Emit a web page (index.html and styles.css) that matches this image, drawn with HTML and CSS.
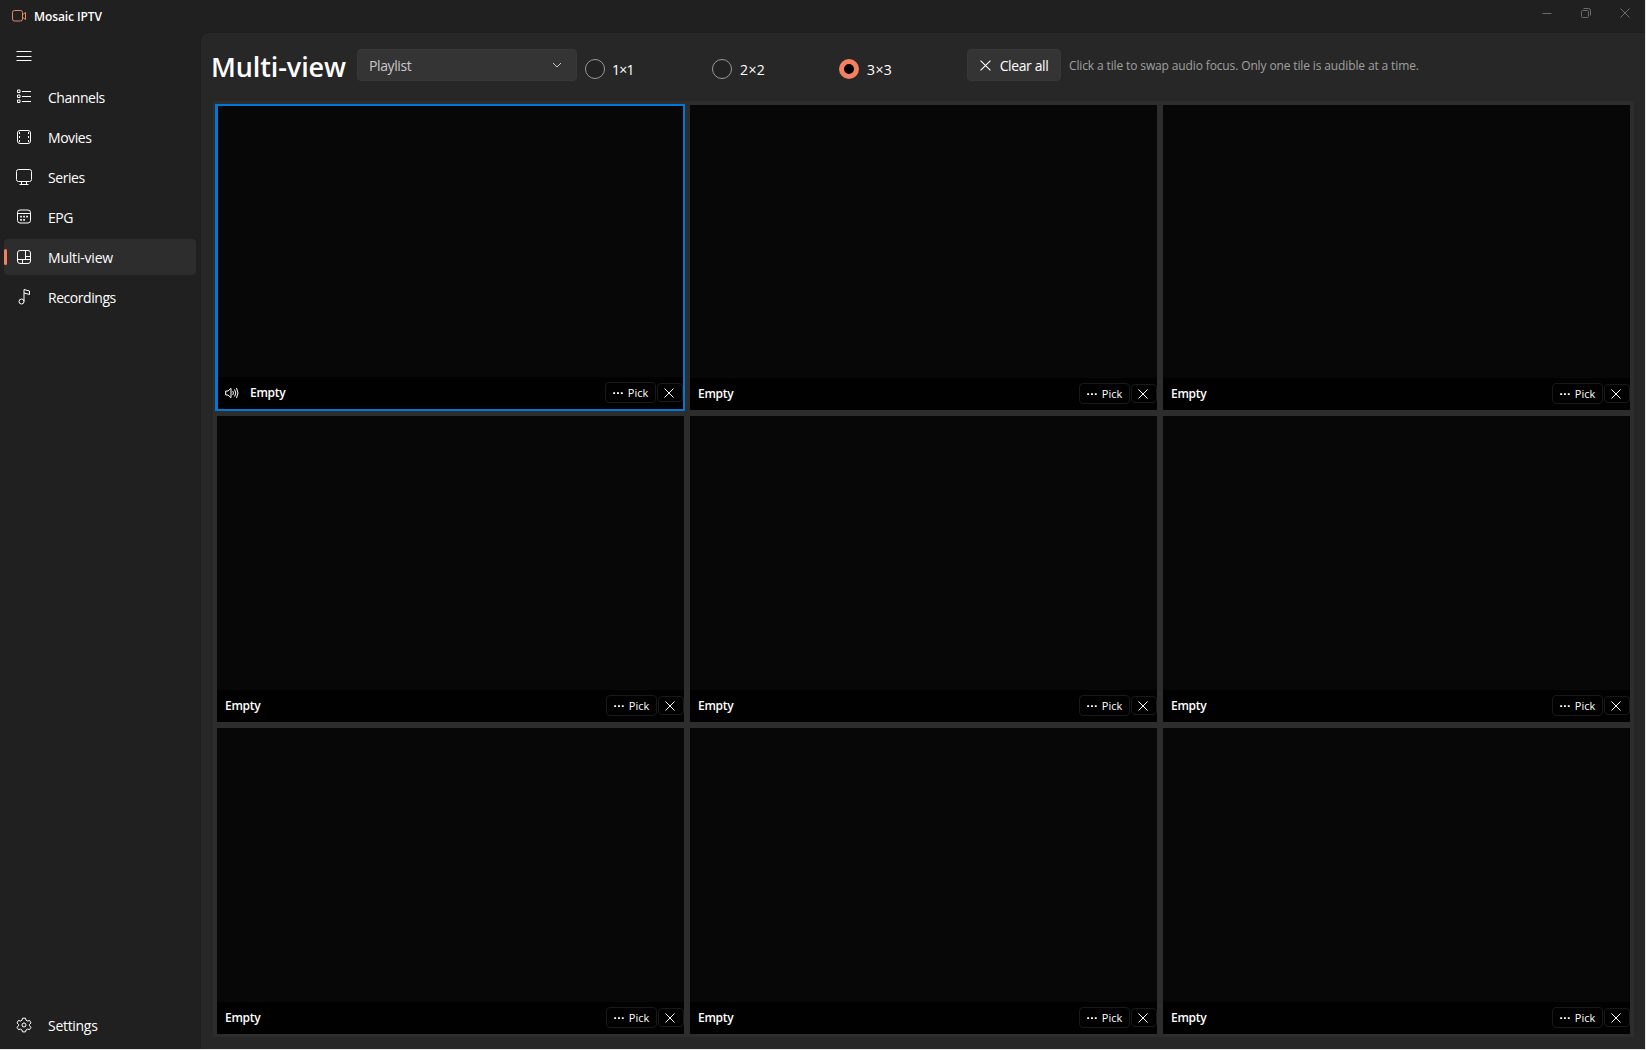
FILE: index.html
```
<!DOCTYPE html>
<html lang="en">
<head>
    <meta charset="UTF-8">
    <meta name="viewport" content="width=device-width, initial-scale=1.0">
    <title>Mosaic IPTV</title>
    <link rel="stylesheet" href="styles.css">
</head>
<body>
    <!-- shared glyphs -->
    <svg class="sprite">
        <symbol id="i-x" viewBox="0 0 10 10"><path d="M.5 .5l9 9M9.5 .5l-9 9"/></symbol>
        <symbol id="i-dots" viewBox="0 0 10 10"><path d="M.2 4.2h1.9v1.7H.2zM4 4.2h1.9v1.7H4zM7.8 4.2h1.9v1.7H7.8z"/></symbol>
    </svg>
    <div class="window">
        <header class="titlebar">
            <svg class="logo" width="15" height="12" viewBox="0 0 15 12"><rect x=".5" y=".5" width="10" height="10.5" rx="2"/><path d="M11 4.5l2.5-2v7L11 7.5"/></svg>
            <span class="app-name">Mosaic IPTV</span>
            <div class="caption-buttons">
                <svg width="10" height="10" viewBox="0 0 10 10"><path d="M.5 5.5h9"/></svg>
                <svg width="10" height="10" viewBox="0 0 10 10"><rect x=".5" y="2.5" width="7" height="7" rx="1"/><path d="M2.5.5h5a2 2 0 0 1 2 2v5"/></svg>
                <svg width="10" height="10"><use href="#i-x"/></svg>
            </div>
        </header>
        <div class="body">
            <nav class="sidebar">
                <button class="hamburger"><svg width="16" height="16" viewBox="0 0 16 16"><path d="M.5 3.5h15M.5 8.5h15M.5 12.5h15"/></svg></button>
                <a class="nav-item"><svg width="16" height="16" viewBox="0 0 16 16"><path d="M1.5 1H4v2.5H1.5zM1.5 6H4v2.500H1.5zM1.5 11H4v2.500H1.5zM6 2.500h9M6 7.500h9M6 12.500h9"/></svg><span>Channels</span></a>
                <a class="nav-item"><svg width="16" height="16" viewBox="0 0 16 16"><rect x="1.5" y="1.5" width="13" height="13" rx="2.5"/><path stroke-dasharray="2 2" d="M3.5 3v10M12.5 3v10"/></svg><span>Movies</span></a>
                <a class="nav-item"><svg width="16" height="16" viewBox="0 0 16 16"><rect x=".5" y=".5" width="15" height="12" rx="2"/><path d="M5.5 12.5v3M10.5 12.5v3M3.5 15.5h9"/></svg><span>Series</span></a>
                <a class="nav-item"><svg width="16" height="16" viewBox="0 0 16 16"><rect x="1.5" y="1" width="13" height="13" rx="2.5"/><path d="M1.5 4.5h13"/><path stroke-width="1.7" stroke-dasharray="1.7 1.3" d="M4.2 7.7h7.700M4.2 10.800h4.700"/></svg><span>EPG</span></a>
                <a class="nav-item active"><svg width="16" height="16" viewBox="0 0 16 16"><rect x="1.5" y="1.5" width="13" height="13" rx="2.5"/><path d="M9.5 1.5v9M1.5 10.5h13M9.5 7.5h5M6.5 10.5v4"/></svg><span>Multi-view</span></a>
                <a class="nav-item"><svg width="16" height="16" viewBox="0 0 16 16"><circle cx="5.5" cy="12.5" r="2.5"/><path d="M8 12.5V.5L13.5 2v3.500L8 4"/></svg><span>Recordings</span></a>
                <a class="nav-item settings"><svg width="16" height="16" viewBox="0 0 16 16"><circle cx="8" cy="8" r="2"/><path d="M6.500 1.200h3l.5 2 1.500.8 2-.6 1.500 2.500-1.500 1.500v1.400l1.500 1.500-1.500 2.400-2-.6-1.500.9-.5 1.900h-3l-.5-1.900-1.500-.9-2 .6L1 10.300l1.500-1.500V7.400L1 5.900l1.500-2.500 2 .6L6 3.200z"/></svg><span>Settings</span></a>
            </nav>
            <main class="content">
                <div class="toolbar">
                    <h1>Multi-view</h1>
                    <div class="combo"><span>Playlist</span><svg width="10" height="10" viewBox="0 0 10 10"><path d="M1 3l4 4 4-4"/></svg></div>
                    <label class="radio"><i></i>1×1</label>
                    <label class="radio"><i></i>2×2</label>
                    <label class="radio checked"><i></i>3×3</label>
                    <button class="clear"><svg width="11" height="11"><use href="#i-x"/></svg><span>Clear all</span></button>
                    <span class="hint">Click a tile to swap audio focus. Only one tile is audible at a time.</span>
                </div>
                <div class="tiles"></div>
            </main>
        </div>
    </div>
    <script>
        const tiles = document.querySelector('.tiles');
        const speaker = '<svg class="speaker" width="14" height="12" viewBox="0 0 14 12"><path d="M.7 4v4H3l3 2.7V1.3L3 4zM7.8 4q1.2 2 0 4M9.6 2.4q2.4 3.6 0 7.2M11.5 1q3 5 0 10"/></svg>';

        for (let i = 0; i < 9; i++) {
            const tile = document.createElement('div');
            tile.className = i === 0 ? 'tile focused' : 'tile';
            tile.innerHTML = `
                <div class="tile-bar">
                    ${i === 0 ? speaker : ''}
                    <span class="name">Empty</span>
                    <button class="pick"><svg width="10" height="10"><use href="#i-dots"/></svg><span>Pick</span></button>
                    <button class="close"><svg width="10" height="10"><use href="#i-x"/></svg></button>
                </div>`;
            tiles.appendChild(tile);
        }
    </script>
</body>
</html>
```
FILE: styles.css
```
* {
    margin: 0;
    padding: 0;
    box-sizing: border-box;
}

body {
    height: 100vh;
    background: #e8e8e8;
    font-family: "Open Sans", "Noto Sans", sans-serif;
    font-size: 14px;
    color: #fff;
    overflow: hidden;
}

svg {
    fill: none;
    stroke: currentColor;
    stroke-width: 1;
    flex-shrink: 0;
    display: block;
}

.sprite {
    display: none;
}

button {
    font: inherit;
    color: inherit;
    background: none;
    border: none;
}

span, label, h1 {
    white-space: nowrap;
}

.window {
    width: calc(100% - 1px);
    height: calc(100% - 1px);
    background: #202020;
    display: flex;
    flex-direction: column;
}

.titlebar {
    height: 32px;
    padding-left: 12px;
    display: flex;
    align-items: center;
    flex-shrink: 0;
}

.logo {
    color: #e08a68;
}

.app-name {
    margin-left: 7px;
    font-size: 12px;
    font-weight: 600;
    letter-spacing: -0.1px;
}

.caption-buttons {
    margin: 0 15px 6px auto;
    display: flex;
    gap: 29px;
    color: #6a6a6a;
}

.body {
    flex: 1;
    min-height: 0;
    display: flex;
}

.sidebar {
    width: 200px;
    padding: 4px 4px 6px 4px;
    display: flex;
    flex-direction: column;
    gap: 4px;
}

.hamburger {
    height: 39px;
    padding-left: 12px;
    display: flex;
    align-items: center;
}

.nav-item {
    height: 36px;
    padding-left: 12px;
    border-radius: 4px;
    display: flex;
    align-items: center;
    gap: 16px;
    position: relative;
}

.nav-item span {
    letter-spacing: -0.45px;
}

.nav-item.active {
    background: #2d2d2d;
}

.nav-item.active span {
    letter-spacing: -0.2px;
}

.nav-item.active::before {
    content: "";
    position: absolute;
    left: 0;
    top: 10px;
    width: 3px;
    height: 16px;
    border-radius: 2px;
    background: #f48062;
}

.nav-item.settings {
    margin-top: auto;
}

.nav-item.settings span {
    letter-spacing: -0.3px;
}

.content {
    flex: 1;
    min-width: 0;
    padding: 0 11px 12px 12px;
    background: #272727;
    border: 1px solid #1d1d1d;
    border-width: 1px 0 0 1px;
    border-radius: 8px 0 0 0;
    display: flex;
    flex-direction: column;
}

.toolbar {
    height: 68px;
    padding-top: 16px;
    margin-left: -2px;
    display: flex;
    align-items: flex-start;
}

h1 {
    width: 146px;
    font-size: 27px;
    font-weight: 600;
    line-height: 36px;
    letter-spacing: -0.1px;
}

.combo {
    width: 220px;
    height: 32px;
    padding: 0 14px 0 11px;
    background: #343434;
    border: 1px solid #383838;
    border-radius: 4px;
    color: #c8c8c8;
    display: flex;
    align-items: center;
    justify-content: space-between;
}

.combo span {
    letter-spacing: -0.4px;
}

.radio {
    width: 127px;
    height: 20px;
    margin-top: 10px;
    display: flex;
    align-items: center;
    gap: 8px;
    letter-spacing: 0.4px;
}

.combo + .radio {
    margin-left: 8px;
    gap: 7px;
    letter-spacing: -0.8px;
}

.radio i {
    width: 20px;
    height: 20px;
    border: 1px solid #999;
    border-radius: 50%;
    background: #222;
}

.radio.checked i {
    border: 5px solid #f48062;
    background: #000;
}

.clear {
    width: 94px;
    height: 32px;
    margin-left: 1px;
    background: #343434;
    border: 1px solid #383838;
    border-radius: 4px;
    display: flex;
    align-items: center;
    justify-content: center;
    gap: 9px;
    letter-spacing: -0.4px;
}

.hint {
    margin-left: 8px;
    line-height: 33px;
    font-size: 12px;
    letter-spacing: -0.13px;
    color: #a0a0a0;
}

.tiles {
    flex: 1;
    min-height: 0;
    padding: 3.6px 4px 3px;
    background: #2d2d2d;
    display: grid;
    grid-template-columns: repeat(3, 1fr);
    grid-template-rows: repeat(3, 1fr);
    gap: 6px;
}

.tile {
    background: #070707;
    display: flex;
    align-items: flex-end;
}

.tile.focused {
    margin: -1px -1px -1px -2px;
    border: solid #0078d4;
    border-width: 2px 2px 2px 3px;
}

.tile-bar {
    width: 100%;
    height: 32px;
    padding: 0 0 1px 8px;
    background: #010101;
    font-size: 11px;
    display: flex;
    align-items: center;
}

.focused .tile-bar {
    padding-left: 7px;
}

.speaker {
    margin-right: 11px;
}

.name {
    font-size: 12px;
    font-weight: 600;
    letter-spacing: -0.3px;
    margin-right: auto;
}

.pick {
    width: 51px;
    height: 21px;
    margin-right: 1px;
    border: 1px solid #191919;
    border-radius: 4px;
    display: flex;
    align-items: center;
    justify-content: center;
    gap: 5px;
}

.pick svg {
    fill: currentColor;
    stroke: none;
}

.close {
    width: 26px;
    height: 19px;
    padding-right: 2px;
    border: 1px solid #191919;
    border-radius: 4px;
    display: flex;
    align-items: center;
    justify-content: center;
}
```
